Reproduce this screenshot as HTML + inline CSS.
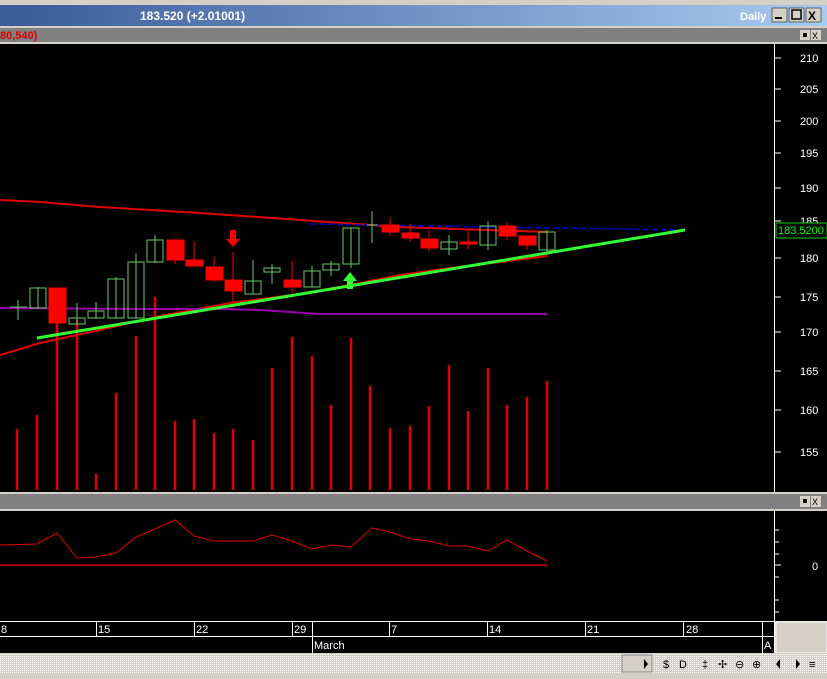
<!DOCTYPE html>
<html><head><style>
body{margin:0;width:827px;height:679px;overflow:hidden;background:#d4d0c8;font-family:"Liberation Sans",sans-serif;}
svg{display:block}
</style></head><body>
<svg width="827" height="679" xmlns="http://www.w3.org/2000/svg" font-family="Liberation Sans, sans-serif">
<defs><linearGradient id="tb" x1="0" x2="1"><stop offset="0" stop-color="#3a5a98"/><stop offset="1" stop-color="#a8caf0"/></linearGradient>
<pattern id="dot" width="2" height="2" patternUnits="userSpaceOnUse"><rect width="2" height="2" fill="#d4d0c8"/><rect width="1" height="1" fill="#ffffff"/></pattern></defs>
<rect x="0" y="0" width="827" height="5" fill="#d4d0c8"/>
<rect x="0" y="5" width="827" height="21" fill="url(#tb)"/>
<text x="140" y="20" fill="#fff" font-size="12" font-weight="bold">183.520 (+2.01001)</text>
<text x="740" y="20" fill="#fff" font-size="11" font-weight="bold">Daily</text>
<rect x="772" y="8" width="15" height="14" fill="#d4d0c8" stroke="#000" stroke-width="0.5"/><rect x="775" y="17" width="7" height="2" fill="#000"/>
<rect x="789" y="8" width="15" height="14" fill="#d4d0c8" stroke="#000" stroke-width="0.5"/><rect x="792" y="10" width="9" height="9" fill="none" stroke="#000" stroke-width="1.5"/>
<rect x="806" y="8" width="15" height="14" fill="#d4d0c8" stroke="#000" stroke-width="0.5"/><text x="808" y="20" font-size="12" font-weight="bold">X</text>
<rect x="0" y="26" width="827" height="2" fill="#d4d0c8"/>
<rect x="0" y="28" width="827" height="14" fill="#808080"/>
<text x="0" y="39" fill="#e00000" font-size="11" font-weight="bold">80,540)</text>
<rect x="800" y="30" width="10" height="10" fill="#d4d0c8"/><rect x="803" y="33" width="4" height="4" fill="#000"/>
<rect x="811" y="30" width="10" height="10" fill="#d4d0c8"/><text x="812" y="39" font-size="9">X</text>
<rect x="0" y="42" width="827" height="2" fill="#d4d0c8"/>
<rect x="0" y="44" width="827" height="448" fill="#000"/>
<line x1="774.5" y1="44" x2="774.5" y2="492" stroke="#fff"/>
<g fill="#fff" font-size="11">
<text x="800" y="62">210</text><text x="800" y="93">205</text><text x="800" y="125">200</text><text x="800" y="157">195</text><text x="800" y="192">190</text><text x="800" y="225">185</text><text x="800" y="262">180</text><text x="800" y="301">175</text><text x="800" y="336">170</text><text x="800" y="375">165</text><text x="800" y="414">160</text><text x="800" y="456">155</text>
</g>
<g stroke="#fff"><line x1="775" y1="58" x2="781" y2="58"/><line x1="775" y1="89" x2="781" y2="89"/><line x1="775" y1="121" x2="781" y2="121"/><line x1="775" y1="153" x2="781" y2="153"/><line x1="775" y1="188" x2="781" y2="188"/><line x1="775" y1="221" x2="781" y2="221"/><line x1="775" y1="258" x2="781" y2="258"/><line x1="775" y1="297" x2="781" y2="297"/><line x1="775" y1="332" x2="781" y2="332"/><line x1="775" y1="371" x2="781" y2="371"/><line x1="775" y1="410" x2="781" y2="410"/><line x1="775" y1="452" x2="781" y2="452"/></g>
<rect x="776" y="223" width="51" height="15" fill="#000" stroke="#0c0"/><text x="778" y="234" fill="#0f0" font-size="11">183.5200</text>
<!-- volume -->
<g stroke="#e00000" stroke-width="2.5">
<line x1="17" y1="490" x2="17" y2="429"/><line x1="37" y1="490" x2="37" y2="415"/><line x1="57" y1="490" x2="57" y2="320"/><line x1="77" y1="490" x2="77" y2="320"/><line x1="96" y1="490" x2="96" y2="474"/><line x1="116" y1="490" x2="116" y2="393"/><line x1="136" y1="490" x2="136" y2="336"/><line x1="155" y1="490" x2="155" y2="297"/><line x1="175" y1="490" x2="175" y2="421"/><line x1="194" y1="490" x2="194" y2="419"/><line x1="214" y1="490" x2="214" y2="433"/><line x1="233" y1="490" x2="233" y2="429"/><line x1="253" y1="490" x2="253" y2="440"/><line x1="272" y1="490" x2="272" y2="368"/><line x1="292" y1="490" x2="292" y2="337"/><line x1="312" y1="490" x2="312" y2="356"/><line x1="331" y1="490" x2="331" y2="405"/><line x1="351" y1="490" x2="351" y2="338"/><line x1="370" y1="490" x2="370" y2="386"/><line x1="390" y1="490" x2="390" y2="428"/><line x1="410" y1="490" x2="410" y2="426"/><line x1="429" y1="490" x2="429" y2="406"/><line x1="449" y1="490" x2="449" y2="365"/><line x1="468" y1="490" x2="468" y2="411"/><line x1="488" y1="490" x2="488" y2="368"/><line x1="507" y1="490" x2="507" y2="405"/><line x1="527" y1="490" x2="527" y2="397"/><line x1="547" y1="490" x2="547" y2="381"/>
</g>
<!-- MAs -->
<polyline fill="none" stroke="#e00000" stroke-width="2" points="0,200 40,202 100,207 200,213 300,220 400,227 547,232"/>
<polyline fill="none" stroke="#e00000" stroke-width="2" points="0,355 40,343 100,330 160,316 230,303 300,294 350,285 400,275 450,268 500,262 547,256"/>
<polyline fill="none" stroke="#90a" stroke-width="2" points="0,308 150,309 220,309 260,310 320,314 547,314"/>
<line x1="310" y1="224" x2="680" y2="230" stroke="#00c" stroke-width="1.5" stroke-dasharray="6,3"/>
<line x1="37" y1="338" x2="685" y2="230" stroke="#3f3" stroke-width="3"/>
<!-- candles -->
<g stroke="#6c6" stroke-width="1" fill="none">
<line x1="18" y1="300" x2="18" y2="320"/><line x1="10" y1="307" x2="27" y2="307"/>
<line x1="38" y1="287" x2="38" y2="308"/><rect x="30" y="288" width="16" height="20"/>
<line x1="77" y1="303" x2="77" y2="324"/><rect x="69" y="318" width="16" height="6"/>
<line x1="96" y1="302" x2="96" y2="318"/><rect x="88" y="311" width="16" height="7"/>
<line x1="116" y1="277" x2="116" y2="318"/><rect x="108" y="279" width="16" height="39"/>
<line x1="136" y1="253" x2="136" y2="318"/><rect x="128" y="262" width="16" height="56"/>
<line x1="155" y1="235" x2="155" y2="263"/><rect x="147" y="240" width="16" height="22"/>
<line x1="253" y1="260" x2="253" y2="294"/><rect x="245" y="281" width="16" height="13"/>
<line x1="272" y1="264" x2="272" y2="284"/><rect x="264" y="268" width="16" height="4"/>
<line x1="312" y1="266" x2="312" y2="287"/><rect x="304" y="271" width="16" height="16"/>
<line x1="331" y1="261" x2="331" y2="276"/><rect x="323" y="264" width="16" height="6"/>
<line x1="351" y1="228" x2="351" y2="268"/><rect x="343" y="228" width="16" height="36"/>
<line x1="372" y1="211" x2="372" y2="243"/><line x1="367" y1="225" x2="378" y2="225"/>
<line x1="449" y1="235" x2="449" y2="255"/><rect x="441" y="242" width="16" height="7"/>
<line x1="488" y1="221" x2="488" y2="250"/><rect x="480" y="226" width="16" height="19"/>
<line x1="547" y1="230" x2="547" y2="255"/><rect x="539" y="232" width="16" height="18"/>
</g>
<g fill="#f00" stroke="#f00">
<rect x="49" y="288" width="17" height="35"/>
<line x1="175" y1="240" x2="175" y2="264"/><rect x="167" y="240" width="17" height="20"/>
<line x1="194" y1="242" x2="194" y2="266"/><rect x="186" y="260" width="17" height="6"/>
<line x1="214" y1="257" x2="214" y2="282"/><rect x="206" y="267" width="17" height="13"/>
<line x1="233" y1="252" x2="233" y2="302"/><rect x="225" y="280" width="17" height="11"/>
<line x1="292" y1="261" x2="292" y2="293"/><rect x="284" y="280" width="17" height="7"/>
<line x1="390" y1="218" x2="390" y2="236"/><rect x="382" y="225" width="17" height="7"/>
<line x1="410" y1="224" x2="410" y2="242"/><rect x="402" y="233" width="17" height="5"/>
<line x1="429" y1="230" x2="429" y2="252"/><rect x="421" y="239" width="17" height="9"/>
<line x1="468" y1="230" x2="468" y2="250"/><rect x="460" y="242" width="17" height="2"/>
<line x1="507" y1="222" x2="507" y2="240"/><rect x="499" y="226" width="17" height="10"/>
<line x1="527" y1="236" x2="527" y2="250"/><rect x="519" y="236" width="17" height="9"/>
</g>
<polygon points="230,230 236,230 236,239 240,239 233,247 226,239 230,239" fill="#f00"/>
<polygon points="347,289 353,289 353,281 357,281 350,272 343,281 347,281" fill="#3f3"/>
<!-- indicator -->
<rect x="0" y="492" width="827" height="2" fill="#d4d0c8"/>
<rect x="0" y="494" width="827" height="15" fill="#808080"/>
<rect x="800" y="496" width="10" height="11" fill="#d4d0c8"/><rect x="803" y="499" width="4" height="4" fill="#000"/>
<rect x="811" y="496" width="10" height="11" fill="#d4d0c8"/><text x="812" y="505" font-size="9">X</text>
<rect x="0" y="509" width="827" height="2" fill="#d4d0c8"/>
<rect x="0" y="511" width="827" height="110" fill="#000"/>
<line x1="774.5" y1="511" x2="774.5" y2="621" stroke="#fff"/>
<g stroke="#fff"><line x1="775" y1="530" x2="779" y2="530"/><line x1="775" y1="542" x2="779" y2="542"/><line x1="775" y1="554" x2="779" y2="554"/><line x1="775" y1="565" x2="781" y2="565"/><line x1="775" y1="577" x2="779" y2="577"/><line x1="775" y1="600" x2="779" y2="600"/><line x1="775" y1="612" x2="779" y2="612"/></g>
<text x="812" y="570" fill="#fff" font-size="11">0</text>
<line x1="0" y1="565" x2="547" y2="565" stroke="#c00" stroke-width="1.5"/>
<polyline fill="none" stroke="#e00000" stroke-width="1" points="0,545 37,544 57,533 77,558 96,557 116,553 136,537 155,529 175,520 194,536 214,541 253,541 272,535 292,541 312,549 331,545 351,547 372,528 390,532 410,539 429,541 449,546 468,546 488,551 507,540 527,551 547,561"/>
<!-- date axis -->
<rect x="0" y="621" width="775" height="32" fill="#000"/>
<line x1="0" y1="621.5" x2="775" y2="621.5" stroke="#fff"/>
<line x1="0" y1="636.5" x2="775" y2="636.5" stroke="#fff"/>
<g stroke="#fff"><line x1="96.5" y1="622" x2="96.5" y2="636"/><line x1="194.5" y1="622" x2="194.5" y2="636"/><line x1="292.5" y1="622" x2="292.5" y2="636"/><line x1="312.5" y1="622" x2="312.5" y2="653"/><line x1="389.5" y1="622" x2="389.5" y2="636"/><line x1="487.5" y1="622" x2="487.5" y2="636"/><line x1="585.5" y1="622" x2="585.5" y2="636"/><line x1="683.5" y1="622" x2="683.5" y2="636"/><line x1="762.5" y1="622" x2="762.5" y2="653"/><line x1="774.5" y1="621" x2="774.5" y2="653"/></g>
<g fill="#fff" font-size="11"><text x="1" y="633">8</text><text x="98" y="633">15</text><text x="196" y="633">22</text><text x="294" y="633">29</text><text x="391" y="633">7</text><text x="489" y="633">14</text><text x="587" y="633">21</text><text x="686" y="633">28</text><text x="314" y="649">March</text><text x="764" y="649">A</text></g>
<rect x="776" y="622" width="51" height="31" fill="#d4d0c8" stroke="#fff"/>
<!-- bottom bar -->
<rect x="0" y="653" width="827" height="20" fill="url(#dot)"/>
<rect x="0" y="673" width="827" height="6" fill="#d4d0c8"/>
<rect x="622" y="655" width="30" height="17" fill="#d4d0c8" stroke="#888"/>
<polygon points="644,659 648,664 644,669" fill="#000"/>
<g font-size="11" fill="#000"><text x="663" y="668">$</text><text x="679" y="668">D</text><text x="702" y="668">‡</text><text x="718" y="668">✢</text><text x="735" y="668">⊖</text><text x="752" y="668">⊕</text><text x="809" y="668">≡</text></g>
<polygon points="780,659 776,664 780,669" fill="#000"/><polygon points="796,659 800,664 796,669" fill="#000"/>
</svg>
</body></html>
